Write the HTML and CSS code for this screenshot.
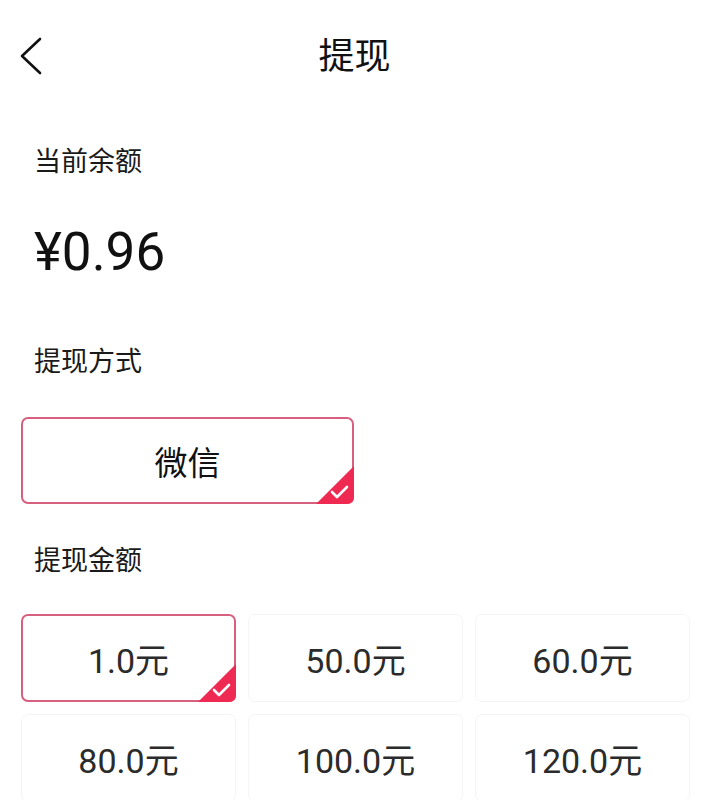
FILE: index.html
```html
<!DOCTYPE html>
<html lang="zh-CN">

<head>
  <meta charset="UTF-8">
  <meta name="viewport" content="width=device-width, initial-scale=1.0">
  <title>提现</title>
  <link rel="stylesheet" href="styles.css">
</head>

<body>
  <div class="header">
    <a class="back" href="#">
      <svg width="26" height="40" viewBox="0 0 26 40">
        <path d="M22 2 L4 19 L22 36" fill="none" stroke="#111" stroke-width="2.6" stroke-linecap="round" stroke-linejoin="round" />
      </svg>
    </a>
    <h1>提现</h1>
    <span></span>
  </div>

  <div class="label balance-label">当前余额</div>
  <div class="balance">¥0.96</div>

  <div class="label method-label">提现方式</div>
  <div class="method option selected">
    微信
    <svg class="tick" width="38" height="38" viewBox="0 0 38 38">
      <path d="M38 0 L38 31 Q38 38 31 38 L0 38 Z" fill="#ef2a52" />
      <path d="M16 26 L21 31 L31 21" fill="none" stroke="#fff" stroke-width="2.6" stroke-linecap="round" stroke-linejoin="round" />
    </svg>
  </div>

  <div class="label amount-label">提现金额</div>
  <div class="amounts" id="amounts">
    <div class="option selected">1.0元
      <svg class="tick" width="38" height="38" viewBox="0 0 38 38">
        <path d="M38 0 L38 31 Q38 38 31 38 L0 38 Z" fill="#ef2a52" />
        <path d="M16 26 L21 31 L31 21" fill="none" stroke="#fff" stroke-width="2.6" stroke-linecap="round" stroke-linejoin="round" />
      </svg>
    </div>
    <div class="option">50.0元</div>
    <div class="option">60.0元</div>
    <div class="option">80.0元</div>
    <div class="option">100.0元</div>
    <div class="option">120.0元</div>
  </div>
</body>

</html>
```

FILE: styles.css
```css
body {
  font-family: Roboto, "Noto Sans CJK SC", sans-serif;
  background-color: #ffffff;
  color: #111;
  margin: 0;
  padding: 0;
}

.header {
  height: 110px;
  padding-top: 3px;
  box-sizing: border-box;
  display: grid;
  grid-template-columns: 70px 1fr 70px;
  align-items: center;
}

.back {
  display: flex;
  padding-left: 18px;
}

.header h1 {
  margin: 0;
  text-align: center;
  font-size: 36px;
  font-weight: 400;
  line-height: 40px;
}

.label {
  font-size: 27px;
  line-height: 36px;
  padding-left: 34px;
  color: #1a1a1a;
}

.balance-label {
  margin-top: 34px;
}

.balance {
  margin-top: 42px;
  padding-left: 34px;
  font-size: 53px;
  line-height: 60px;
}

.method-label {
  margin-top: 62px;
}

.option {
  position: relative;
  box-sizing: border-box;
  height: 88px;
  display: flex;
  align-items: center;
  justify-content: center;
  border: 1px solid #f5f5f5;
  border-radius: 7px;
  font-size: 34px;
  color: #2b2b2b;
}

.option.selected {
  border: 2px solid #d8607f;
}

.method {
  margin: 37px 0 0 21px;
  width: 333px;
  height: 87px;
  font-size: 33px;
  color: #111;
}

.tick {
  position: absolute;
  right: -2px;
  bottom: -2px;
}

.amount-label {
  margin-top: 39px;
}

.amounts {
  margin-top: 35px;
  padding: 0 19px 0 21px;
  display: grid;
  grid-template-columns: repeat(3, 1fr);
  gap: 12px;
}
```
